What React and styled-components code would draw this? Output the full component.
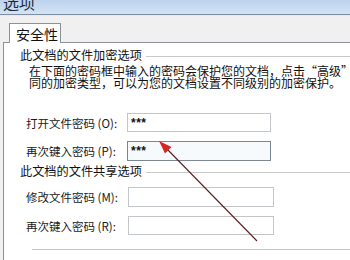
import React from "react";
import styled, { createGlobalStyle } from "styled-components";

const GlobalStyle = createGlobalStyle`
  html, body {
    margin: 0;
    padding: 0;
    background: #f0f0f0;
    overflow: hidden;
  }
  body {
    font-family: "SimSun", "Noto Sans CJK SC", "Liberation Sans", sans-serif;
    color: #111;
  }
`;

const Window = styled.div`
  position: relative;
  width: 350px;
  height: 260px;
  overflow: hidden;
  background: #f0f0f0;
`;

const TitleBar = styled.div`
  height: 14px;
  background: linear-gradient(to bottom, #bcd3ec, #d3e3f4);
  border-bottom: 1px solid #7f8fa3;
  overflow: hidden;
`;

const TitleText = styled.div`
  margin: -7px 0 0 3px;
  font-size: 16px;
  line-height: 18px;
  color: #1e2a3a;
`;

const Frame = styled.div`
  padding-left: 3px;
  border-top: 1px solid #e4ebf3;
`;

const TabStrip = styled.div`
  display: flex;
  padding: 7px 0 0 6px;
`;

const Tab = styled.div`
  width: 52px;
  height: 20px;
  margin-bottom: -1px;
  background: #fff;
  border: 1px solid #8e9296;
  border-bottom: none;
  font-size: 14px;
  line-height: 20px;
  padding-left: 6px;
  box-sizing: border-box;
  position: relative;
  z-index: 1;
`;

const Panel = styled.div`
  width: 400px;
  height: 240px;
  background: #fff;
  border-top: 1px solid #8e9296;
  border-left: 1px solid #8e9296;
  padding: 5px 0 0 16px;
  box-sizing: border-box;
`;

const GroupHeading = styled.div`
  display: flex;
  align-items: center;
  gap: 4px;
  font-size: 12.2px;
  line-height: 14px;
  margin-top: ${(p) => p.$top || 0}px;
  white-space: nowrap;

  &::after {
    content: "";
    flex: 1;
    border-top: 1px solid #c9c9c9;
    margin-top: 2px;
  }
`;

const Paragraph = styled.div`
  margin: 3px 0 0 9px;
  font-size: 12px;
  line-height: 12px;
  white-space: nowrap;
`;

const FieldRow = styled.div`
  display: flex;
  align-items: center;
  margin-top: ${(p) => p.$top}px;
  padding-left: 6px;
`;

const Label = styled.div`
  width: ${(p) => p.$width}px;
  font-size: 11.5px;
  white-space: nowrap;
  color: #1a1a1a;
`;

const Input = styled.div`
  width: ${(p) => p.$width}px;
  height: ${(p) => p.$height || 19}px;
  box-sizing: border-box;
  border: 1px solid ${(p) => (p.$focused ? "#7d8792" : "#c2c5ca")};
  background: ${(p) => (p.$focused ? "#f6fafd" : "#fff")};
  font-family: "Liberation Sans", sans-serif;
  font-size: 12px;
  font-weight: bold;
  line-height: 18px;
  padding-left: 3px;
  letter-spacing: 0.5px;
`;

const Divider = styled.div`
  margin: 14px 0 0 12px;
  border-top: 1px solid #c6c6c6;
`;

const Arrow = styled.svg`
  position: absolute;
  left: 0;
  top: 0;
  pointer-events: none;
`;

const fields = [
  { label: "打开文件密码 (O):", value: "***", top: 24, lw: 101, iw: 144 },
  { label: "再次键入密码 (P):", value: "***", top: 9, lw: 101, iw: 144, focused: true, h: 20 },
];

const shareFields = [
  { label: "修改文件密码 (M):", top: 9, lw: 102, iw: 146, h: 20 },
  { label: "再次键入密码 (R):", top: 9, lw: 102, iw: 146 },
];

export default function App() {
  return (
    <Window>
      <GlobalStyle />
      <TitleBar>
        <TitleText>选项</TitleText>
      </TitleBar>
      <Frame>
        <TabStrip>
          <Tab>安全性</Tab>
        </TabStrip>
        <Panel>
          <GroupHeading>此文档的文件加密选项</GroupHeading>
          <Paragraph>
            <div>在下面的密码框中输入的密码会保护您的文档，点击“高级”</div>
            <div>同的加密类型，可以为您的文档设置不同级别的加密保护。</div>
          </Paragraph>
          {fields.map((f) => (
            <FieldRow key={f.label} $top={f.top}>
              <Label $width={f.lw}>{f.label}</Label>
              <Input $width={f.iw} $height={f.h} $focused={f.focused}>
                {f.value}
              </Input>
            </FieldRow>
          ))}
          <GroupHeading $top={3}>此文档的文件共享选项</GroupHeading>
          {shareFields.map((f) => (
            <FieldRow key={f.label} $top={f.top}>
              <Label $width={f.lw}>{f.label}</Label>
              <Input $width={f.iw} $height={f.h} />
            </FieldRow>
          ))}
          <Divider />
        </Panel>
      </Frame>
      <Arrow width="350" height="260" viewBox="0 0 350 260">
        <line x1="257" y1="241" x2="167" y2="149" stroke="#5a1f22" strokeWidth="1.1" />
        <polygon points="159,141 171.5,147 165,153.5" fill="#d62626" />
      </Arrow>
    </Window>
  );
}
